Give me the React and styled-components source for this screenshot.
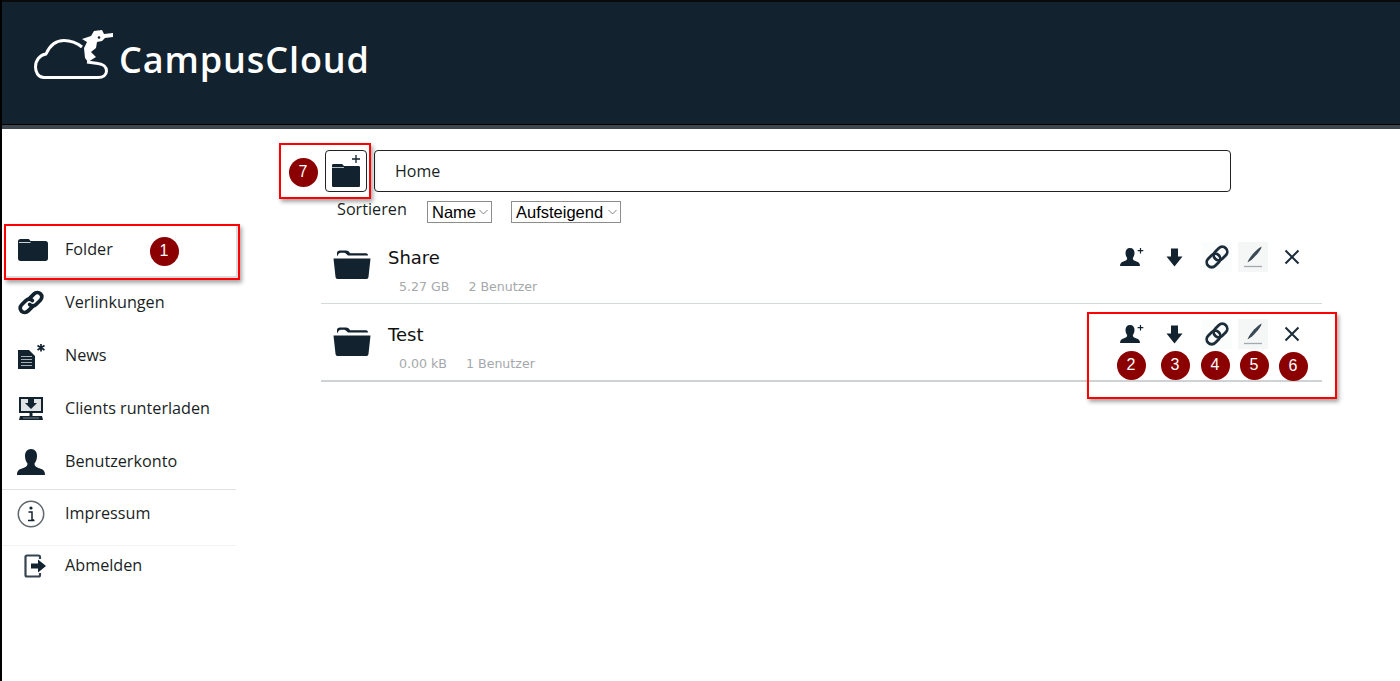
import React from "react";
import styled, { createGlobalStyle } from "styled-components";

const navy = "#12222f";
const red = "#ff0000";

const GlobalStyle = createGlobalStyle`
  html, body {
    margin: 0;
    padding: 0;
    background: #fff;
  }
  body {
    font-family: "Open Sans", "Liberation Sans", sans-serif;
    color: ${navy};
  }
`;

const Page = styled.div`
  position: relative;
  box-sizing: border-box;
  width: 1400px;
  height: 681px;
  overflow: hidden;
  border-left: 2px solid #000;
  background: #fff;
`;

const Header = styled.header`
  box-sizing: border-box;
  display: flex;
  align-items: flex-start;
  height: 129px;
  padding: 26px 0 0 32px;
  gap: 5px;
  background: ${navy};
  border-top: 2px solid #0a0a0a;
  border-bottom: 4px solid #3d4750;
  box-shadow: inset 0 -1px 0 #000;
`;

const LogoText = styled.div`
  font-family: "Open Sans", "Liberation Sans", sans-serif;
  font-size: 36px;
  font-weight: 600;
  line-height: 56px;
  margin-top: 4px;
  letter-spacing: 0.9px;
  color: #fff;
`;

const Body = styled.div`
  display: flex;
`;

const Sidebar = styled.nav`
  box-sizing: border-box;
  width: 234px;
  padding-top: 94px;
  flex-shrink: 0;
`;

const NavRow = styled.div`
  display: flex;
  align-items: center;
  height: ${(p) => p.$height}px;
  box-sizing: border-box;
  padding-left: ${(p) => p.$inset}px;
  padding-bottom: ${(p) => p.$bottom}px;
  border-top: ${(p) => (p.$line ? `1px solid ${p.$line}` : "none")};
`;

const NavIcon = styled.span`
  display: flex;
  justify-content: center;
  width: 32px;
  margin-right: ${(p) => 31 - p.$inset}px;
  flex-shrink: 0;
`;

const NavLabel = styled.span`
  font-size: 16.2px;
  margin-top: -2px;
  color: #1a1f24;
  white-space: nowrap;
`;

const Content = styled.main`
  flex: 1;
  padding: 21px 0 0 89px;
  min-width: 0;
`;

const Toolbar = styled.div`
  display: flex;
  gap: 7px;
  height: 42px;
`;

const NewFolder = styled.div`
  box-sizing: border-box;
  display: flex;
  align-items: center;
  justify-content: center;
  width: 42px;
  height: 42px;
  border: 1px solid #222;
  border-radius: 4px;
`;

const PathBox = styled.div`
  box-sizing: border-box;
  display: flex;
  align-items: center;
  width: 857px;
  height: 42px;
  padding-left: 20px;
  border: 1px solid #222;
  border-radius: 4px;
  font-size: 16px;
  color: #1a1f24;
`;

const SortRow = styled.div`
  display: flex;
  align-items: center;
  height: 22px;
  margin-top: 9px;
  margin-left: 12px;
`;

const SortLabel = styled.span`
  width: 90px;
  font-size: 16.2px;
  margin-top: -6px;
  color: #1a1f24;
`;

const SortSelect = styled.div`
  box-sizing: border-box;
  display: flex;
  align-items: center;
  justify-content: space-between;
  height: 22px;
  margin-right: 19px;
  padding: 0 3px 0 4px;
  width: ${(p) => p.$width}px;
  border: 1px solid #8d8d8d;
  font-family: "Liberation Sans", sans-serif;
  font-size: 16.5px;
  color: #000;
`;

const List = styled.div`
  width: 1001px;
  margin-left: -4px;
  margin-top: 3px;
`;

const FolderRow = styled.div`
  box-sizing: border-box;
  display: flex;
  height: 78px;
  padding: ${(p) => p.$top}px 0 0 12px;
  border-bottom: ${(p) => p.$rule};
`;

const FolderIconWrap = styled.div`
  width: 55px;
  padding-top: 2px;
  flex-shrink: 0;
`;

const FolderInfo = styled.div`
  flex: 1;
`;

const FolderName = styled.div`
  font-family: "DejaVu Sans", sans-serif;
  font-size: 18px;
  line-height: 20px;
  color: #111;
`;

const FolderMeta = styled.div`
  display: flex;
  margin-top: 11px;
  padding-left: 11px;
  gap: 19px;
  font-family: "DejaVu Sans", sans-serif;
  font-size: 12.6px;
  line-height: 16px;
  color: #a5a8ab;
`;

const Actions = styled.div`
  display: flex;
  align-self: flex-start;
  width: 204px;
  height: 28px;
  margin: -6px 7px 0 0;
`;

const ActionCell = styled.div`
  display: flex;
  align-items: center;
  justify-content: center;
  width: ${(p) => p.$width}px;
  height: 30px;
  margin-left: ${(p) => p.$gap || 0}px;
  background: ${(p) => p.$tint || "transparent"};
`;

// annotations sit over the screenshot, so these are absolute
const Mark = styled.div`
  position: absolute;
  box-sizing: border-box;
  left: ${(p) => p.$x}px;
  top: ${(p) => p.$y}px;
  width: ${(p) => p.$w}px;
  height: ${(p) => p.$h}px;
  border: 2px solid ${red};
  box-shadow: 2px 3px 4px rgba(0, 0, 0, 0.35)${(p) => (p.$inner ? ", inset -3px -3px 0 -1px #dcdcdc" : "")};
`;

const Badge = styled.div`
  position: absolute;
  display: flex;
  align-items: center;
  justify-content: center;
  left: ${(p) => p.$x - 14.5}px;
  top: ${(p) => p.$y - 14.5}px;
  width: 29px;
  height: 29px;
  border-radius: 50%;
  background: #8b0000;
  color: #fff;
  font-family: "Liberation Sans", sans-serif;
  font-size: 16px;
`;

const FolderSolid = () => (
  <svg width="30" height="23" viewBox="0 0 30 23" fill={navy}>
    <path d="M0 3.500C0 2 1 1 2.500 1H10C11 1 11.600 1.500 12 2.500L12.500 3H27.500C29 3 30 4 30 5.500V20.500C30 22 29 23 27.500 23H2.500C1 23 0 22 0 20.500Z" />
    <path d="M1 4.500H12.500" stroke="#fff" strokeWidth="0.800" />
  </svg>
);

const FolderOpen = () => (
  <svg width="38" height="29" viewBox="0 0 38 31" fill={navy} preserveAspectRatio="none">
    <path d="M4 7V3.500C4 1.500 5 0.500 7 0.500H13C15 0.500 16 1.500 17 3.500H33C34.500 3.500 35 4.500 35 6H15C13 3.500 12 3 10 3H8C6 3 5.500 4.500 4 7Z" />
    <path d="M0.500 9H37.500L35.500 28.500C35.300 30 34.500 31 33 31H5C3.500 31 2.700 30 2.500 28.500Z" />
  </svg>
);

const ChainIcon = () => (
  <svg width="28" height="27" viewBox="0 0 24 24" fill="none" stroke={navy} strokeWidth="3.300" strokeLinecap="round">
    <path d="M10.500 8.500L14.500 4.500C16.200 2.800 19 2.800 20.500 4.300C22 5.800 22 8.300 20.300 10L16.500 13.800C14.800 15.500 12.200 15.300 10.800 13.700" />
    <path d="M13.500 15.500L9.500 19.500C7.800 21.200 5 21.200 3.500 19.700C2 18.200 2 15.700 3.700 14L7.500 10.200C9.200 8.500 11.800 8.700 13.200 10.300" />
  </svg>
);

const LinkLoops = () => (
  <svg width="24" height="24" viewBox="0 0 24 24" fill="none" stroke="#1c2c38" strokeWidth="2.800">
    <rect x="8" y="3.500" width="15" height="10" rx="5" transform="rotate(-45 15.500 8.500)" />
    <rect x="1" y="10.500" width="15" height="10" rx="5" transform="rotate(-45 8.500 15.500)" />
  </svg>
);

const NewsIcon = () => (
  <svg width="30" height="26" viewBox="0 0 30 26">
    <path d="M2 7H13L19 13V27H2Z" fill={navy} />
    <path d="M5 13.500H16M5 16.500H16M5 19.500H16M5 22.500H16" stroke="#a9b0b5" strokeWidth="1" />
    <path d="M25 1V8.500M21.500 2.500L28.500 7M28.500 2.500L21.500 7" stroke={navy} strokeWidth="1.700" />
  </svg>
);

const MonitorIcon = () => (
  <svg width="26" height="23" viewBox="0 0 26 23">
    <path d="M1 0H25V16H1Z" fill={navy} />
    <path d="M3 2H23V14H3Z" fill="#dfe3e6" />
    <path d="M10 2H16V6H19L13 12L7 6H10Z" fill={navy} />
    <path d="M11.500 16H14.500V19H11.500Z" fill={navy} />
    <path d="M2 19H24L25 23H1Z" fill={navy} />
    <path d="M5 21H21" stroke="#9aa3a9" strokeWidth="0.800" />
  </svg>
);

const UserIcon = () => (
  <svg width="28" height="26" viewBox="0 0 28 26" fill={navy}>
    <path d="M14 0C18 0 20 3 20 7C20 10 19 12.500 17.500 14.500C17.500 17 19 18 23 19.500C26 20.500 28 21.500 28 26H0C0 21.500 2 20.500 5 19.500C9 18 10.500 17 10.500 14.500C9 12.500 8 10 8 7C8 3 10 0 14 0Z" />
  </svg>
);

const InfoIcon = () => (
  <svg width="28" height="28" viewBox="0 0 28 28" fill="none">
    <circle cx="14" cy="14" r="12.700" stroke="#5d666d" strokeWidth="1.500" />
    <circle cx="14" cy="8" r="1.600" fill={navy} />
    <path d="M11.500 12H15V20H17M11 20.500H17.500" stroke={navy} strokeWidth="1.500" />
  </svg>
);

const SignOutIcon = () => (
  <svg width="24" height="24" viewBox="0 0 24 24" fill="none">
    <path d="M16 5V3C16 2 15.500 1.500 14.500 1.500H3C2 1.500 1.500 2 1.500 3V21C1.500 22 2 22.500 3 22.500H14.500C15.500 22.500 16 22 16 21V19" stroke="#37444f" strokeWidth="2.200" />
    <path d="M7 9.500H14V5.500L22 12L14 18.500V14.500H7Z" fill={navy} />
  </svg>
);

const UserPlus = () => (
  <svg width="24" height="20" viewBox="0 0 24 20" fill={navy}>
    <path d="M10 1C13 1 14.500 3 14.500 6C14.500 8 13.700 10 12.800 11C12.800 13 14 13.500 16.500 14.500C18.500 15.300 20 16 20 19H0C0 16 1.500 15.300 3.500 14.500C6 13.500 7.200 13 7.200 11C6.300 10 5.500 8 5.500 6C5.500 3 7 1 10 1Z" />
    <path d="M20.500 1V6.500M17.700 3.700H23.300" stroke={navy} strokeWidth="1.200" fill="none" />
  </svg>
);

const ArrowDown = () => (
  <svg width="17" height="19" viewBox="0 0 17 19" fill={navy}>
    <path d="M5 0.500H12V8.500H16.500L8.500 18.500L0.500 8.500H5Z" />
  </svg>
);

const Pen = () => (
  <svg width="20" height="22" viewBox="0 0 20 22">
    <path d="M18.500 0.500C18.500 3 15.500 7 9 13.500L4.500 16.500C5.500 13 11 5 18.500 0.500Z" fill="#3a4854" />
    <path d="M1 20.500H19" stroke="#a3a9ae" strokeWidth="1.300" />
  </svg>
);

const Cross = () => (
  <svg width="16" height="16" viewBox="0 0 16 16" fill="none" stroke="#1c2c38" strokeWidth="2">
    <path d="M1.500 1.500L14.500 14.500M14.500 1.500L1.500 14.500" />
  </svg>
);

const CaretDown = () => (
  <svg width="9" height="6" viewBox="0 0 9 6" fill="none" stroke="#777" strokeWidth="0.900">
    <path d="M0.500 1L4.500 5L8.500 1" />
  </svg>
);

const CloudLogo = () => (
  <svg width="80" height="54" viewBox="34 28 80 54">
    <path
      d="M87 62L98 63.500C103 64 106.500 67 106.500 71C106.500 75 103 77.500 98 77.500L44 77.500C38 77.500 35.500 72 35.500 67C35.500 60 40 55 46 54C50 45 56 40.500 64 40.500C71 40.500 77 43 82 47"
      fill="none"
      stroke="#fff"
      strokeWidth="3"
    />
    <path
      d="M82 39L91 36L94 31L102 30L104 34L113 33L113 37L105 38L102 41L97 42L96 48L91 52L96 57L88 62L85 58L84 48L87 42Z"
      fill="#fff"
    />
    <circle cx="99" cy="37.500" r="1.300" fill={navy} />
  </svg>
);

const navItems = [
  { label: "Folder", icon: <FolderSolid />, inset: 15 },
  { label: "Verlinkungen", icon: <ChainIcon /> },
  { label: "News", icon: <NewsIcon /> },
  { label: "Clients runterladen", icon: <MonitorIcon /> },
  { label: "Benutzerkonto", icon: <UserIcon />, height: 54, bottom: 1 },
  { label: "Impressum", icon: <InfoIcon />, line: "#dfe1e3", height: 56, bottom: 8 },
  { label: "Abmelden", icon: <SignOutIcon />, line: "#f1f2f3", inset: 18, height: 41 },
];

const folders = [
  { name: "Share", size: "5.27 GB", users: "2 Benutzer", top: 22, rule: "1px solid #d3d8db" },
  { name: "Test", size: "0.00 kB", users: "1 Benutzer", top: 21, rule: "2px solid #cfd3d6" },
];

const badges = [
  { n: 1, x: 164, y: 251 },
  { n: 7, x: 303, y: 172 },
  { n: 2, x: 1131, y: 365 },
  { n: 3, x: 1175, y: 365 },
  { n: 4, x: 1215, y: 365 },
  { n: 5, x: 1254, y: 365 },
  { n: 6, x: 1293, y: 366 },
];

function FolderActions() {
  return (
    <Actions>
      <ActionCell $width={42}><UserPlus /></ActionCell>
      <ActionCell $width={42}><ArrowDown /></ActionCell>
      <ActionCell $width={30} $gap={7} $tint="#fbfcfc"><LinkLoops /></ActionCell>
      <ActionCell $width={30} $gap={6} $tint="#f5f7f7"><Pen /></ActionCell>
      <ActionCell $width={30} $gap={9}><Cross /></ActionCell>
    </Actions>
  );
}

export default function App() {
  return (
    <Page>
      <GlobalStyle />
      <Header>
        <CloudLogo />
        <LogoText>CampusCloud</LogoText>
      </Header>
      <Body>
        <Sidebar>
          {navItems.map(({ label, icon, inset = 13, height = 53, bottom = 0, line }) => (
            <NavRow key={label} $line={line} $inset={inset} $height={height} $bottom={bottom}>
              <NavIcon $inset={inset}>{icon}</NavIcon>
              <NavLabel>{label}</NavLabel>
            </NavRow>
          ))}
        </Sidebar>
        <Content>
          <Toolbar>
            <NewFolder>
              <svg width="30" height="32" viewBox="0 0 30 32" fill={navy}>
                <path d="M1 10.500C1 9.500 1.500 9 2.500 9H11L13 11H27.500C28.500 11 29 11.500 29 12.500V30.500C29 31.500 28.500 32 27.500 32H2.500C1.500 32 1 31.500 1 30.500Z" />
                <path d="M1 12.500H13" stroke="#fff" strokeWidth="0.700" />
                <path d="M25 0V8M21 4H29" stroke={navy} strokeWidth="1.300" fill="none" />
              </svg>
            </NewFolder>
            <PathBox>Home</PathBox>
          </Toolbar>
          <SortRow>
            <SortLabel>Sortieren</SortLabel>
            <SortSelect $width={65}>Name <CaretDown /></SortSelect>
            <SortSelect $width={110}>Aufsteigend <CaretDown /></SortSelect>
          </SortRow>
          <List>
            {folders.map((f) => (
              <FolderRow key={f.name} $top={f.top} $rule={f.rule}>
                <FolderIconWrap><FolderOpen /></FolderIconWrap>
                <FolderInfo>
                  <FolderName>{f.name}</FolderName>
                  <FolderMeta>
                    <span>{f.size}</span>
                    <span>{f.users}</span>
                  </FolderMeta>
                </FolderInfo>
                <FolderActions />
              </FolderRow>
            ))}
          </List>
        </Content>
      </Body>
      <Mark $x={2} $y={224} $w={236} $h={56} $inner />
      <Mark $x={277} $y={143} $w={92} $h={56} />
      <Mark $x={1085} $y={312} $w={250} $h={87} />
      {badges.map((b) => (
        <Badge key={b.n} $x={b.x - 2} $y={b.y}>{b.n}</Badge>
      ))}
    </Page>
  );
}
